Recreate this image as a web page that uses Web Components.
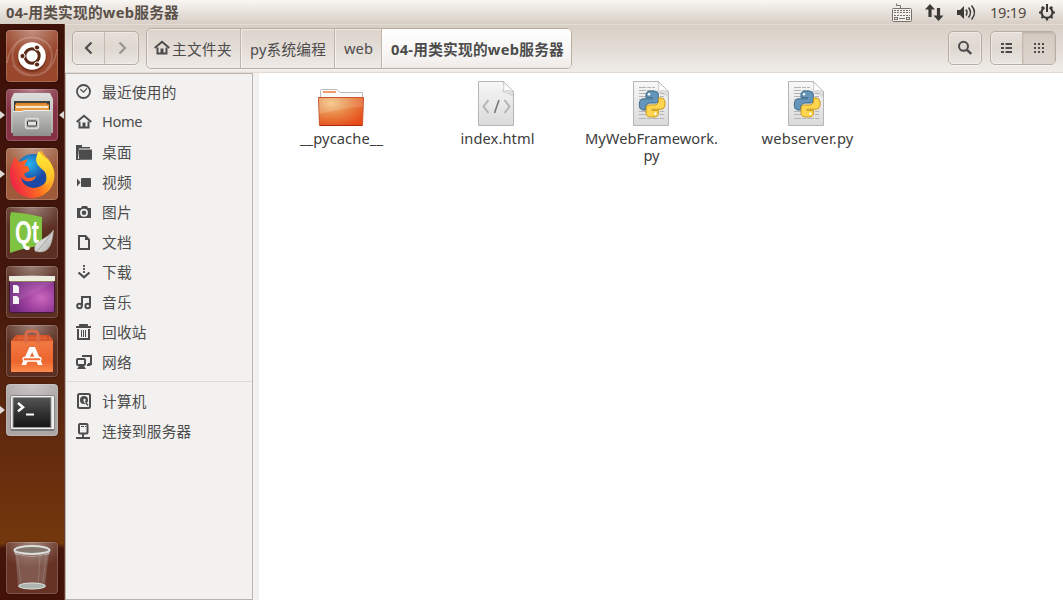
<!DOCTYPE html>
<html lang="zh">
<head>
<meta charset="utf-8">
<title>04-用类实现的web服务器</title>
<style>
html,body{margin:0;padding:0;width:1063px;height:600px;overflow:hidden;background:#fff;font-family:"Noto Sans","Noto Sans CJK SC",sans-serif;font-size:14.667px;color:#4c4c4c}
</style>
</head>
<body>
<desktop-screen></desktop-screen>
<script>
const define=(name,html,setup)=>customElements.define(name,class extends HTMLElement{
  connectedCallback(){
    if(this.shadowRoot)return;
    const t=document.createElement('template');
    t.innerHTML=typeof html==='function'?html(this):html;
    this.attachShadow({mode:'open'}).appendChild(t.content.cloneNode(true));
    if(setup)setup(this,this.shadowRoot);
  }
});

/* ---------- symbolic icons, 16 x 16 ---------- */
const G='#4c4c4c';
const symbols={
recent:`<circle cx="7.5" cy="7.5" r="6.5" fill="none" stroke="${G}" stroke-width="1.8"/><path d="M4.3 5.2l3.2 3L11 4.3" fill="none" stroke="${G}" stroke-width="1.2"/>`,
home:`<path d="M.7 8L8 1.8 15.3 8" fill="none" stroke="${G}" stroke-width="1.9"/><path d="M3.5 7.5v6h9v-6" fill="none" stroke="${G}" stroke-width="2"/><path d="M6.500 8.500h3v5h-3z" fill="${G}"/>`,
folder:`<path d="M0 1h6v2h8v1.500H3L2 15H0z" fill="${G}"/><rect x="3" y="5.500" width="13" height="10.200" rx=".5" fill="${G}"/><path d="M0 2h2v14H0zM0 15h4v1H0z" fill="${G}"/>`,
video:`<rect x="5" y="4" width="10" height="9" rx="1" fill="${G}"/><path d="M1 4.500L4.500 8.500 1 12.500z" fill="${G}"/>`,
photo:`<path d="M1 4h4l1-2h5l1 2h3v10H1z" fill="${G}"/><circle cx="8" cy="8.800" r="3.100" fill="none" stroke="#f2f1f0" stroke-width="1.700"/>`,
doc:`<path d="M3 2h6.500L13 5.700V15H3z" fill="none" stroke="${G}" stroke-width="2"/><path d="M9 1l5 5H9z" fill="${G}"/>`,
down:`<path d="M8 1v2M8 4v2M8 7v2" stroke="${G}" stroke-width="1.800"/><path d="M2.500 8.500L8 13.300l5.500-4.800" fill="none" stroke="${G}" stroke-width="2.300"/>`,
music:`<g fill="none" stroke="${G}" stroke-width="2"><circle cx="3.500" cy="12" r="2.300"/><circle cx="11.700" cy="12" r="2.300"/><path d="M6 12V3h8v9"/></g>`,
trash:`<path d="M0 3h15M4 2V1h7v1" fill="none" stroke="${G}" stroke-width="1.800"/><path d="M2 5v10h11V5" fill="none" stroke="${G}" stroke-width="2"/><path d="M5.500 6v7M7.500 6v7M9.500 6v7" stroke="${G}"/>`,
net:`<path d="M7 3V2h8v8h-3" fill="none" stroke="${G}" stroke-width="2"/><path d="M11 10h2l2 2h-4z" fill="${G}"/><rect x="1" y="5" width="8" height="6" rx="1" fill="none" stroke="${G}" stroke-width="2"/><path d="M3 12h5l2 3H1z" fill="${G}"/>`,
disk:`<rect x="2" y="1" width="12" height="14" rx="1.500" fill="none" stroke="${G}" stroke-width="2"/><circle cx="8" cy="7" r="4" fill="${G}"/><circle cx="8.500" cy="7" r="1.200" fill="#f2f1f0"/><path d="M8 8.500l4 3.500" stroke="#f2f1f0" stroke-width="1.500"/><path d="M9.500 9.500l2.500 3" stroke="${G}" stroke-width="1.300"/>`,
server:`<rect x="3" y="1" width="8.500" height="9.500" rx="1" fill="none" stroke="${G}" stroke-width="2"/><path d="M5 3.500h3M9 3.500h1" stroke="${G}"/><path d="M7 11v3M0 15h14" stroke="${G}" stroke-width="2"/>`,
back:`<path d="M10.500 2.500L5 8l5.500 5.500" fill="none" stroke="${G}" stroke-width="2.200"/>`,
next:`<path d="M5.500 2.500L11 8l-5.500 5.500" fill="none" stroke="#989591" stroke-width="2.200"/>`,
search:`<circle cx="6.500" cy="6.300" r="4.500" fill="none" stroke="${G}" stroke-width="2"/><path d="M9.500 9.500l4.800 4.300" stroke="${G}" stroke-width="2.400"/>`,
list:`<path d="M2 4h3M2 8h3M2 12h3M6.500 4H13M6.500 8H13M6.500 12H13" stroke="${G}" stroke-width="2"/>`,
grid:`<path d="M3 4h2M7 4h2M11 4h2M3 8h2M7 8h2M11 8h2M3 12h2M7 12h2M11 12h2" stroke="${G}" stroke-width="2"/>`
};
define('sym-icon',e=>`<style>:host{display:block;width:16px;height:16px;flex:none}svg{display:block}</style><svg width="16" height="16" viewBox="0 0 16 16">${symbols[e.getAttribute('name')]}</svg>`);

/* Text run whose tracking is tuned to a given width */
define('ui-text',`<style>:host{display:block;white-space:nowrap;flex:none;line-height:20px}span{display:inline-block;vertical-align:top}</style><span><slot></slot></span>`,(e,r)=>{
  const w=+e.getAttribute('fit');if(!w)return;
  const s=r.querySelector('span');
  const n=[...e.textContent].length;
  s.style.letterSpacing=((w-s.getBoundingClientRect().width)/n).toFixed(3)+'px';
  e.style.width=w+'px';
});

/* ---------- top panel ---------- */
define('top-panel',`<style>
:host{display:flex;align-items:center;height:24px;box-sizing:border-box;padding:0 7px 0 6px;background:linear-gradient(#f8f6f3 0,#f2eeea 20%,#d7cec5 100%);color:#5a5048}
.t{font-weight:700}.s{flex:1}svg{display:block;flex:none}.c{color:#504a44}
</style>
<ui-text class="t" fit="173">04-用类实现的web服务器</ui-text><div class="s"></div>
<svg width="102" height="24" viewBox="0 0 102 24"><g>
<g fill="none" stroke="#77716b"><path d="M12.500 8V5.500h-4V3.500"/><rect x="4.500" y="8.500" width="19" height="13" rx="1" fill="#f2efec"/><rect x="6.500" y="17.500" width="3" height="2"/><path d="M11 18.500h6"/><rect x="18.500" y="17.500" width="3" height="2"/><path d="M6 10.500h16M6 12.500h16M6 15.500h16" stroke-dasharray="2 1"/></g>
<path d="M42 4l5 5.500h-3.400V17h-3.200V9.500H37zM50.500 21l5-5.500h-3.400V8h-3.200v7.500h-3.400z" fill="#3c3a37"/>
<path d="M69 10h3l4-4v13l-4-4h-3z" fill="#3c3a37"/><g fill="none" stroke="#3c3a37" stroke-width="1.500"><path d="M78 9.500q2 3 0 6M80.500 7.500q4 5 0 10M83.500 5.500q6 7 0 14"/></g></g></svg>
<ui-text class="c" fit="36" style="margin-top:-1px">19:19</ui-text>
<svg width="18" height="18" viewBox="0 0 18 18" style="margin-left:12px;margin-top:-1px"><g fill="none" stroke="#3c3a37"><path d="M6.500 4.500a5.500 5.500 0 1 0 5 0" stroke-width="2.200"/><path d="M9 1v8" stroke-width="2"/><path d="M3.800 3.800l1.500 1.500M14.200 3.800l-1.500 1.500M1 9.500h3M17 9.500h-3M3.500 15l1.800-1.800M14.500 15l-1.800-1.800M9 17.500V15" stroke-width="2.200"/></g></svg>`);

/* ---------- launcher ---------- */
const art={
dash:`<path d="M1 33C4 12 20 4 34 9C47 14 50 30 40 40M51 19C49 40 33 49 18 43C5 38 3 22 12 12M7 17C16 4 36 4 45 18M45 36C36 49 16 49 7 35" fill="none" stroke="#fff" stroke-opacity=".2" stroke-width="1.600"/><circle cx="26" cy="27.500" r="14.500" fill="#481609" opacity=".4"/><circle cx="26" cy="26" r="13.800" fill="#fff"/><circle cx="26" cy="26" r="7.200" fill="none" stroke="#5b2815" stroke-width="3"/><g fill="#5b2815" stroke="#fff"><circle cx="16.500" cy="26" r="2.600"/><circle cx="31" cy="17.500" r="2.600"/><circle cx="31" cy="34.500" r="2.600"/></g>`,
files:`<path d="M8 4h36l3 6v34H5V10z" fill="url(#mt)"/><path d="M8 12h36v11H8z" fill="#42413f"/><path d="M10 14h31v2H10z" fill="#d98228"/><path d="M9 15.500h34v7H9z" fill="#e79a3e"/><path d="M10 18h32" stroke="#fff" stroke-width="1.500"/><path d="M18 21h24v2H18z" fill="#c8702c"/><path d="M7 22h9l2-1h27v26H7z" fill="url(#mt2)"/><path d="M7 22.500h9l2-1h27" stroke="#eee" fill="none"/><rect x="19.500" y="29.500" width="13" height="10" rx="2" fill="#b8b8b6" stroke="#dcdcdc" stroke-width="1.500"/><rect x="21.500" y="32" width="9" height="5" rx="1" fill="#e4e4e2" stroke="#333"/>`,
fox:`<circle cx="27" cy="23" r="17" fill="url(#bl)"/><path d="M4 26C4 17 7 14 9 9l4 5 9-3-4 7c3-1 6 1 5 5l-5 3c2 6 8 4 12 2-1 6-11 8-15 1 1 8 9 13 18 10 9-3 10-12 7-17-7-7-7-13-5-20 2 3 3 5 5 7 4 3 6 8 8 13 3 17-9 28-22 28C13 49 4 40 4 26z" fill="url(#fx)"/><path d="M33 3c2 3 3 5 5 6 7 4 10 12 9 18-2 8-7 10-8 10 2-5 2-11-1-14-7-6-11-10-5-20z" fill="url(#ye)"/>`,
qt:`<path d="M5 5q15 1 31 5v29q-16 1-32 7V10z" fill="#80c342"/><text x="9" y="36" font-family="Liberation Sans" font-weight="700" font-size="31" textLength="24" lengthAdjust="spacingAndGlyphs" fill="#fff">Qt</text><path d="M47.500 23C46 38 43 48 29 44C27 33 40 34 47.500 23z" fill="url(#lf)" stroke="#bbb" stroke-width=".5"/><path d="M47 24Q39 37 30 45" fill="none" stroke="#999" stroke-width=".8"/>`,
desk:`<rect x="3.500" y="10" width="45" height="36.500" rx="2" fill="url(#pu)" stroke="#3e173d"/><path d="M3 10q23-1 46 0v5H3z" fill="#eeecdc"/><path d="M4 15.500h44" stroke="#8a8057"/><path d="M4 16h44L4 40z" fill="#fff" opacity=".08"/><path d="M7 19h4l2 2v6H7zM7 30h4l2 2v6H7z" fill="#f4f0f4"/>`,
shop:`<path d="M6 15L10 10h33l4 5v32H5V16z" fill="url(#or)"/><path d="M10 10v5M42 10v5M5 15h42" stroke="#be4720" fill="none"/><path d="M20 18v-8q0-4 4-4h4q4 0 4 4v8" fill="none" stroke="#d96c49" stroke-width="3"/><path d="M23.500 22h5.500l7.500 18h-4.500L26.200 27 20 40h-4.500z" fill="#fff"/><rect x="17" y="32.500" width="18" height="3.500" rx="1.500" fill="#f06e31" stroke="#fff" stroke-width="1.300"/>`,
term:`<rect x="4.500" y="11.500" width="44" height="35" rx="1.500" fill="#f0f0f0" stroke="#888"/><path d="M5 46h43" stroke="#777" stroke-width="2"/><rect x="7" y="13.500" width="38" height="30" fill="url(#tm)" stroke="#9c9c9c"/><path d="M12 19l5 4.200-5 4.200" fill="none" stroke="#fff" stroke-width="2.500"/><path d="M20 30.500h8" stroke="#fff" stroke-width="2"/>`,
bin:`<path d="M9 9h34l-4 35q-13 5-27 0z" fill="#ddd" opacity=".22"/><path d="M11 13l4 27M40 13l-3 27M34 14l-2 29" stroke="#ddd" opacity=".2"/><ellipse cx="26" cy="8" rx="17.500" ry="4" fill="#85786f" stroke="#dcdedc" stroke-width="2"/><path d="M8 8q1 6 18 6t18-6l-1 4q-17 5-34 0z" fill="#d3d6d3"/><ellipse cx="26" cy="44" rx="13.500" ry="3" fill="#abb4af" stroke="#e1e4e1"/>`
};
const defs=`<defs><linearGradient id="tm" x2="0" y2="1"><stop stop-color="#555"/><stop offset=".5" stop-color="#333"/><stop offset="1" stop-color="#151515"/></linearGradient><linearGradient id="lf" x2="1" y2="1"><stop stop-color="#fff"/><stop offset="1" stop-color="#a8a8a6"/></linearGradient><linearGradient id="mt" x2="0" y2="1"><stop stop-color="#dededc"/><stop offset="1" stop-color="#a8a8a6"/></linearGradient><linearGradient id="mt2" x2="0" y2="1"><stop stop-color="#c5c5c3"/><stop offset="1" stop-color="#8f8f8d"/></linearGradient><radialGradient id="bl" cx=".4" cy=".3"><stop stop-color="#28b5ef"/><stop offset="1" stop-color="#1a48a4"/></radialGradient><linearGradient id="fx" x1="0" y1=".7" x2="1" y2=".3"><stop stop-color="#ed1e4a"/><stop offset=".5" stop-color="#ff6c20"/><stop offset="1" stop-color="#ffd42b"/></linearGradient><linearGradient id="ye" x2="0" y2="1"><stop stop-color="#ffee3d"/><stop offset="1" stop-color="#ffb31e"/></linearGradient><radialGradient id="pu" cx=".7" cy=".6" r=".65"><stop stop-color="#cb68bd"/><stop offset=".5" stop-color="#a043a0"/><stop offset="1" stop-color="#742a80"/></radialGradient><linearGradient id="or" x2="0" y2="1"><stop stop-color="#d85028"/><stop offset=".2" stop-color="#f17843"/><stop offset=".7" stop-color="#ec652d"/><stop offset="1" stop-color="#fb8a4d"/></linearGradient></defs>`;
define('launcher-tile',e=>`<style>
:host{display:block;position:relative;width:52px;height:52px;flex:none;margin-left:6px}
.b{box-sizing:border-box;width:52px;height:52px;border-radius:4px;background:radial-gradient(ellipse 36px 26px at 50% 0,rgba(255,255,255,.42),rgba(255,255,255,.12) 70%,rgba(255,255,255,.03)),var(--tile,#56281a);box-shadow:inset 0 0 0 1px rgba(255,255,255,.18),0 0 2px rgba(0,0,0,.35)}
svg{display:block}
.l,.r{position:absolute;top:22px;border:4px solid transparent}
.l{left:-6px;border-left:5px solid #ded9d7;border-right:0}.r{right:-6px;border-right:5px solid #ded9d7;border-left:0}
</style><div class="b"><svg width="52" height="52" viewBox="0 0 52 52">${defs}${art[e.getAttribute('icon')]}</svg></div>${e.hasAttribute('running')?'<i class="l"></i>':''}${e.hasAttribute('active')?'<i class="r"></i>':''}`);
define('app-launcher',`<style>
:host{display:flex;flex-direction:column;gap:7px;box-sizing:border-box;width:65px;height:576px;padding:6px 0;flex:none;background:linear-gradient(#3d1108 0,#44170d 45%,#5c280f 68%,#6b2f0d 80%,#74380d 90.2%,#461609 91%,#421209 100%);box-shadow:inset -1px 0 #6b4032}
.s{flex:1}
</style>
<launcher-tile icon="dash" style="--tile:#964126"></launcher-tile>
<launcher-tile icon="files" running active style="--tile:#812b3e"></launcher-tile>
<launcher-tile icon="fox" running style="--tile:#9b5534"></launcher-tile>
<launcher-tile icon="qt"></launcher-tile>
<launcher-tile icon="desk"></launcher-tile>
<launcher-tile icon="shop"></launcher-tile>
<launcher-tile icon="term" running style="--tile:#aaa3a2"></launcher-tile>
<div class="s"></div>
<launcher-tile icon="bin" style="--tile:#612c1d"></launcher-tile>`);

/* ---------- toolbar ---------- */
define('button-group',`<style>
:host{display:flex;box-sizing:border-box;height:34px;border:1px solid #b9aca0;border-radius:5px;background:linear-gradient(#e6dfd9,#dfd8d1 50%,#eae6e1);box-shadow:inset 0 0 0 1px rgba(255,255,255,.35),0 1px rgba(255,255,255,.5);overflow:hidden}
::slotted(*){display:flex;flex:1;align-items:center;justify-content:center}
::slotted(.first){flex:none;width:31px}
::slotted(.split){border-left:1px solid #c6bbb1}
::slotted(.on){background:linear-gradient(#d3c9c0,#ded7cf);box-shadow:inset 0 1px 2px #b9aca0}
</style><slot></slot>`);
define('path-bar',`<style>
:host{display:flex;box-sizing:border-box;width:426px;height:41px;border:1px solid #b9aca0;border-radius:5px;background:linear-gradient(#dcd4cc,#e4ddd7 50%,#efebe7);overflow:hidden;box-shadow:0 1px rgba(255,255,255,.5)}
div{display:flex;align-items:center;box-sizing:border-box;height:39px;border-right:1px solid #c1b5aa;box-shadow:inset 1px 1px rgba(255,255,255,.5);padding-left:8px}
div:last-child{border:0;background:linear-gradient(#fff,#f9f8f7 50%,#efebe8);flex:1;font-weight:700}
sym-icon{margin-top:-1px}
</style>
<div style="width:94px;padding-left:7px"><sym-icon name="home"></sym-icon><ui-text fit="60" style="margin-left:2px">主文件夹</ui-text></div>
<div style="width:94px;padding-left:9px"><ui-text fit="76">py系统编程</ui-text></div>
<div style="width:47px;padding-left:9px"><ui-text fit="29" style="margin-top:-2px">web</ui-text></div>
<div style="padding-left:9px"><ui-text fit="173">04-用类实现的web服务器</ui-text></div>`);
define('tool-bar',`<style>
:host{display:flex;align-items:center;box-sizing:border-box;height:49px;padding:0 7px;border-top:1px solid #e4ddd6;border-bottom:1px solid #e2dad3;background:linear-gradient(#d8cfc6,#e3dcd5 50%,#efece8)}
.s{flex:1}button-group{margin-top:-1px}
</style>
<button-group style="width:67px;margin-right:7px"><span class="first"><sym-icon name="back"></sym-icon></span><span class="split"><sym-icon name="next"></sym-icon></span></button-group>
<path-bar></path-bar><div class="s"></div>
<button-group style="width:34px;margin-right:8px"><span><sym-icon name="search"></sym-icon></span></button-group>
<button-group style="width:66px"><span class="first"><sym-icon name="list"></sym-icon></span><span class="split on"><sym-icon name="grid"></sym-icon></span></button-group>`);

/* ---------- sidebar ---------- */
define('place-row',e=>`<style>:host{display:flex;align-items:center;gap:10px;height:30px;padding-left:10px}ui-text{letter-spacing:.25px}ui-text[fit="41"]{margin-top:-2px}</style><sym-icon name="${e.getAttribute('icon')}"></sym-icon><ui-text fit="${e.getAttribute('fit')||''}">${e.textContent}</ui-text>`);
define('places-sidebar',`<style>
:host{display:block;box-sizing:border-box;width:188px;flex:none;padding-top:3px;border:1px solid #b6b3b0;background:#f2f1f0}
hr{height:1px;border:0;margin:4px 0 4px;background:#dcdad8}
</style>
<place-row icon="recent">最近使用的</place-row>
<place-row icon="home" fit="41">Home</place-row>
<place-row icon="folder">桌面</place-row>
<place-row icon="video">视频</place-row>
<place-row icon="photo">图片</place-row>
<place-row icon="doc">文档</place-row>
<place-row icon="down">下载</place-row>
<place-row icon="music">音乐</place-row>
<place-row icon="trash">回收站</place-row>
<place-row icon="net">网络</place-row>
<hr>
<place-row icon="disk">计算机</place-row>
<place-row icon="server">连接到服务器</place-row>`);

/* ---------- file grid ---------- */
const page=`<path d="M7.500 1.500h25l10 10v34h-35z" transform="translate(-1 0)" fill="url(#pg)" stroke="#b5b5b5"/><path d="M31 1.500q2 7-.5 10q5-2 11 0z" fill="#fff" stroke="#bbb" stroke-width=".8"/><path d="M31 12q5-1 10 1v4z" fill="#aaa" opacity=".3"/>`;
const snake='M25 11c-4.500 0-6 1.300-6 3.600v3h6.500v1.200h-9c-3 0-4.200 2.500-4.200 5.700s1.200 5.500 4 5.500h2.500v-3c0-2.500 2-4 4.500-4h5c2 0 3-1.400 3-3v-5.400c0-2.300-1.600-3.600-6.300-3.600z';
const pics={
folder:`<g transform="translate(-1 0)"><path d="M4.500 22V10.500q0-1 1-1H21l3 3h22.500V22z" fill="#fafafa" stroke="#bbb"/><path d="M7 12h13" stroke="#f29b6b" stroke-width="2"/><path d="M2.500 17.500h45l-1 28h-43z" fill="url(#fo)" stroke="#c9552e"/><path d="M3 18h44v9Q26 28 3 34z" fill="#fff" opacity=".14"/><path d="M4 45.500h42" stroke="#a52d0d"/></g>`,
html:page+`<path d="M16.500 20L11.500 26.500l5 6.500M32.500 20l5 6.500-5 6.500" fill="none" stroke="#b3b3b3" stroke-width="2"/><path d="M27 20l-4.500 13" stroke="#777" stroke-width="1.600"/>`,
py:page+`<path d="M12 7.500h16M12 10.500h15M12 13.500h25M12 16.500h25M12 19.500h25M12 22.500h25M12 25.500h25M12 28.500h25M12 31.500h25M12 34.500h25M12 38.500h25" stroke="#b4b4b4" stroke-dasharray="7 1 4 1"/><path d="${snake}" fill="#6595bb" stroke="#376786"/><path d="${snake}" transform="rotate(180 25.200 24)" fill="#ffd550" stroke="#c99813"/><circle cx="22" cy="14.300" r="1.200" fill="#fff"/><circle cx="28.400" cy="33.700" r="1.200" fill="#fff"/>`
};
define('file-item',e=>`<style>:host{display:flex;flex-direction:column;align-items:center;width:155px;color:#3c3c3c}svg{display:block}.n{margin-top:2px;display:flex;flex-direction:column;align-items:center;padding-left:var(--nudge,0)}ui-text{line-height:17px}</style>
<svg width="50" height="48" viewBox="0 0 50 48"><defs><linearGradient id="pg" x2="0" y2="1"><stop stop-color="#f7f7f7"/><stop offset="1" stop-color="#dadada"/></linearGradient><radialGradient id="fo" cx=".28" cy=".2" r=".9"><stop stop-color="#f3c382"/><stop offset=".5" stop-color="#e88343"/><stop offset="1" stop-color="#e64b18"/></radialGradient></defs>${pics[e.getAttribute('icon')]}</svg>
<div class="n">${e.getAttribute('name').split('|').map((t,i)=>`<ui-text fit="${e.getAttribute('fit').split('|')[i]}">${t}</ui-text>`).join('')}</div>`);
define('file-grid',`<style>:host{display:flex;align-items:flex-start;flex:1;padding:7px 0 0 5px;background:#fff}</style>
<file-item icon="folder" name="__pycache__" fit="83"></file-item>
<file-item icon="html" name="index.html" fit="74" style="--nudge:2px"></file-item>
<file-item icon="py" name="MyWebFramework.|py" fit="133|16"></file-item>
<file-item icon="py" name="webserver.py" fit="92" style="--nudge:2px"></file-item>`);

define('file-manager',`<style>:host{display:flex;flex-direction:column;flex:1;min-width:0}.m{display:flex;flex:1;background:#f2f1f0}file-grid{margin-left:6px}</style><tool-bar></tool-bar><div class="m"><places-sidebar></places-sidebar><file-grid></file-grid></div>`);
define('desktop-screen',`<style>:host{display:flex;flex-direction:column;width:1063px;height:600px;overflow:hidden}.w{display:flex;height:576px}</style><top-panel></top-panel><div class="w"><app-launcher></app-launcher><file-manager></file-manager></div>`);
</script>
</body>
</html>
